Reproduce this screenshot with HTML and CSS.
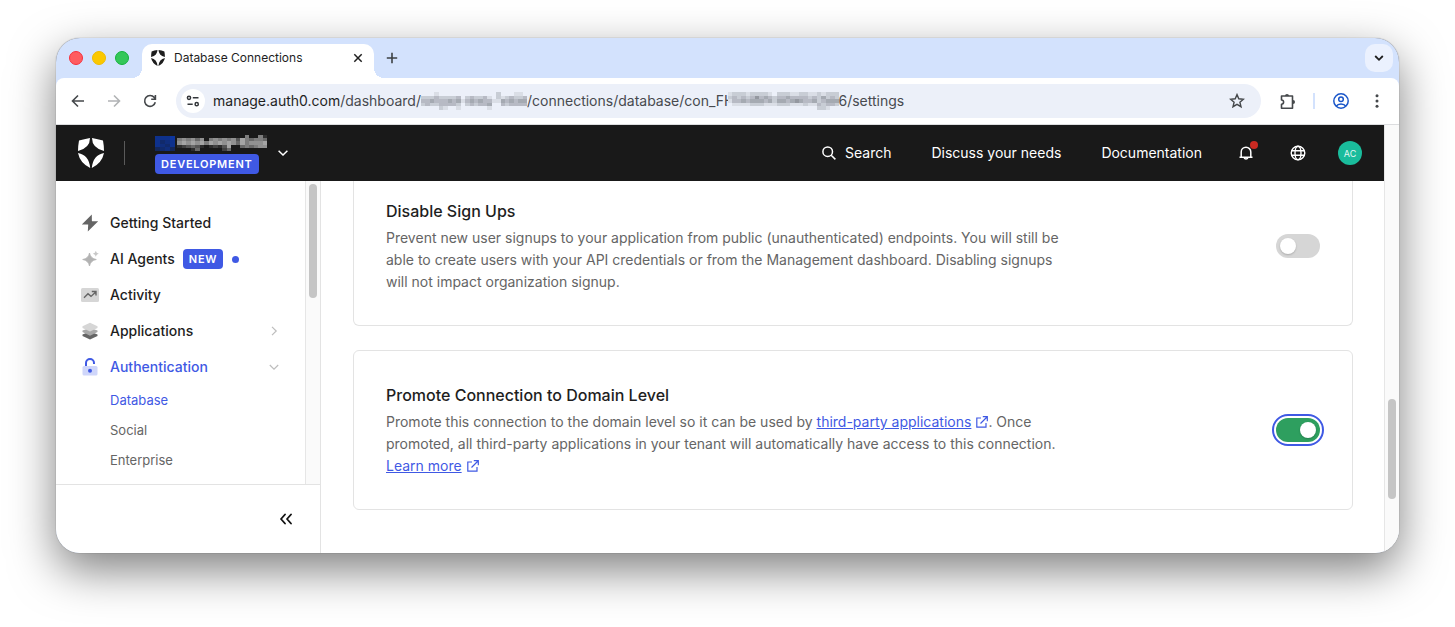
FILE: index.html
```html
<!DOCTYPE html>
<html lang="en">
<head>
  <meta charset="UTF-8" />
  <meta name="viewport" content="width=device-width, initial-scale=1.0" />
  <title>Database Connections</title>
  <link rel="stylesheet" href="styles.css">
</head>
<body>
  <div class="window">
    <div class="tabstrip">
      <div class="lights">
        <span class="light red"></span>
        <span class="light yellow"></span>
        <span class="light green"></span>
      </div>
      <div class="tab">
        <svg class="favicon" width="14" height="16" viewBox="0 0 26 30" fill="#1e1e1e"><path d="M1 2.600Q6 1 12 0Q12 10 0 13Q0 8 1 2.600ZM25 2.600Q20 1 14 0Q14 10 26 13Q26 8 25 2.600ZM0 15Q11 17 12.200 30Q2 25 0 15ZM26 15Q15 17 13.800 30Q24 25 26 15Z"/></svg>
        <span class="tab-title">Database Connections</span>
        <button class="icon-btn tab-close" aria-label="Close tab"><svg width="10" height="10" viewBox="0 0 10 10" fill="none" stroke="#1f1f1f" stroke-width="1.500"><path d="M1.300 1.300l7.400 7.400M8.700 1.300L1.300 8.700"/></svg></button>
      </div>
      <button class="icon-btn new-tab" aria-label="New tab"><svg width="12" height="12" viewBox="0 0 12 12" fill="none" stroke="#3c4043" stroke-width="1.600"><path d="M6 .8v10.400M.8 6h10.400"/></svg></button>
      <button class="icon-btn tab-search" aria-label="Search tabs"><svg width="10" height="8" viewBox="0 0 10 8" fill="none" stroke="#1f1f1f" stroke-width="1.800"><path d="M1.200 2L5 5.800 8.800 2"/></svg></button>
    </div>

    <div class="toolbar">
      <button class="icon-btn nav-btn" aria-label="Back"><svg width="14" height="14" viewBox="0 0 14 14" fill="none" stroke="#45484b" stroke-width="1.600"><path d="M13 7H2M7 1.500L1.500 7 7 12.500"/></svg></button>
      <button class="icon-btn nav-btn" aria-label="Forward"><svg width="14" height="14" viewBox="0 0 14 14" fill="none" stroke="#b1b3b5" stroke-width="1.600"><path d="M1 7h11M7 1.500L12.500 7 7 12.500"/></svg></button>
      <button class="icon-btn nav-btn" aria-label="Reload"><svg width="14" height="14" viewBox="0 0 14 14" fill="none" stroke="#45484b" stroke-width="1.600"><path d="M12.300 8.300A5.400 5.400 0 1 1 11.300 3.600L12 4.500M12.400 1v4.200H8.200"/></svg></button>
      <div class="address">
        <button class="icon-btn site-info" aria-label="Site information"><svg width="14" height="12" viewBox="0 0 14 12" fill="none" stroke="#33363a" stroke-width="1.500"><circle cx="3" cy="2.800" r="1.600"/><path d="M6.800 2.800h5.700M1.500 9.200h5.200"/><circle cx="10.700" cy="9.200" r="1.600"/></svg></button>
        <div class="url"><span class="host">manage.auth0.com</span><span>/dashboard/</span><svg class="mosaic mosaic-path" data-ink="60,64,72" data-rows="000100000000000002000110,222322223023223102123223,334333434134343311434344,232233332023233400323333,000021001000000100000000"></svg><span>/connections/database/con_FH</span><svg class="mosaic mosaic-id" data-ink="60,64,72" data-rows="1222122221022211221121222,2323235343233433332324232,1334344434244345433423444,0111122211122211121132332,0000000000000000000022100"></svg><span>6/settings</span></div>
        <button class="icon-btn bookmark" aria-label="Bookmark"><svg width="16" height="16" viewBox="0 0 16 16" fill="none" stroke="#45484b" stroke-width="1.400"><path d="M8 1.600l1.800 4.200 4.600.4-3.500 3 1.100 4.500L8 11.300l-4 2.400 1.100-4.500-3.500-3 4.600-.4z"/></svg></button>
      </div>
      <button class="icon-btn extensions" aria-label="Extensions"><svg width="17" height="17" viewBox="0 0 17 17"><path d="M2.500 3h11v3.500V15.200h-11v-4a2 2 0 0 0 0-4.200z" fill="none" stroke="#45484b" stroke-width="1.600" stroke-linejoin="round"/><path d="M6 3a2 2 0 0 1 4 0z" fill="#45484b"/><path d="M14 7a2 2 0 0 1 0 4z" fill="#45484b"/></svg></button>
      <span class="toolbar-sep"></span>
      <button class="icon-btn profile" aria-label="Profile"><svg width="16" height="16" viewBox="0 0 16 16" fill="none" stroke="#1a56c9" stroke-width="1.500"><circle cx="8" cy="8" r="7.200"/><circle cx="8" cy="6.300" r="2.300"/><path d="M3.100 13.200q1.600-2.200 4.900-2.200t4.900 2.200"/></svg></button>
      <button class="icon-btn more" aria-label="More"><svg width="4" height="14" viewBox="0 0 4 14" fill="#45484b"><circle cx="2" cy="1.700" r="1.500"/><circle cx="2" cy="7" r="1.500"/><circle cx="2" cy="12.300" r="1.500"/></svg></button>
    </div>

    <div class="viewport">
      <div class="page">
        <header class="header">
          <a href="#" class="logo" aria-label="Auth0"><svg width="26" height="30" viewBox="0 0 26 30" fill="#fff"><path d="M1 2.600Q6 1 12 0Q12 10 0 13Q0 8 1 2.600ZM25 2.600Q20 1 14 0Q14 10 26 13Q26 8 25 2.600ZM0 15Q11 17 12.200 30Q2 25 0 15ZM26 15Q15 17 13.800 30Q24 25 26 15Z"/></svg></a>
          <span class="header-sep"></span>
          <button class="tenant" aria-label="Switch tenant">
            <span class="tenant-info">
              <span class="tenant-name"><svg class="mosaic mosaic-flag" data-ink="10,60,190" data-rows="7778,7567,7657,4564"></svg><svg class="mosaic mosaic-tenant" data-ink="225,225,225" data-rows="00000000000000050051,56564605656563754554,67676757676764756667,12343101213700454566,00014000002400000000"></svg></span>
              <span class="badge">DEVELOPMENT</span>
            </span>
            <svg width="10" height="6" viewBox="0 0 10 6" fill="none" stroke="#fff" stroke-width="1.500"><path d="M.6.7L5 5 9.400.7"/></svg>
          </button>
          <nav class="header-nav">
            <a href="#" class="search"><svg width="14" height="14" viewBox="0 0 14 14" fill="none" stroke="#fff" stroke-width="1.500"><circle cx="5.700" cy="5.700" r="4.800"/><path d="M9.200 9.200l4.200 4.200"/></svg>Search</a>
            <a href="#">Discuss your needs</a>
            <a href="#">Documentation</a>
          </nav>
          <div class="header-tools">
            <button class="icon-btn bell" aria-label="Notifications"><svg width="16" height="16" viewBox="0 0 16 16" fill="none" stroke="#fff" stroke-width="1.500"><path d="M1.500 12.300h13M3.200 12V7a4.800 4.800 0 0 1 9.600 0v5M6.200 12.800a1.900 1.900 0 0 0 3.600 0"/></svg><span class="bell-dot"></span></button>
            <button class="icon-btn" aria-label="Language"><svg width="16" height="16" viewBox="0 0 16 16" fill="none" stroke="#fff" stroke-width="1.400"><circle cx="8" cy="8" r="6.800"/><ellipse cx="8" cy="8" rx="3" ry="6.800"/><path d="M1.500 5.800h13M1.500 10.200h13"/></svg></button>
            <button class="avatar">AC</button>
          </div>
        </header>

        <div class="body-row">
          <aside class="sidebar">
            <div class="nav-scroll">
              <nav class="menu">
                <a href="#" class="item"><svg width="18" height="18" viewBox="0 0 18 18"><path d="M10.800.6L.8 10.500h6.400L6.800 17.400 17.200 7.200h-6.300z" fill="#656565"/></svg>Getting Started</a>
                <a href="#" class="item"><svg width="18" height="18" viewBox="0 0 18 18"><path d="M8.500 3q1 5.500 6.800 6.500-5.800 1-6.800 6.500Q7.500 10.500 1.700 9.500 7.500 8.500 8.500 3z" fill="#b2b2b2" stroke="#b2b2b2" stroke-width=".8"/><path d="M14.800.8q.4 2.300 3 3-2.600.7-3 3-.4-2.300-3-3 2.600-.7 3-3z" fill="#c8c8c8"/></svg>AI Agents<span class="badge new">NEW</span><span class="dot"></span></a>
                <a href="#" class="item"><svg width="18" height="18" viewBox="0 0 18 18"><rect y="2" width="18" height="14" rx="1.500" fill="#d6d6d6"/><path d="M3 11.800l4-4 3 2.600 4.500-4.200M10.800 5.500H15v4" fill="none" stroke="#656565" stroke-width="1.400"/></svg>Activity</a>
                <a href="#" class="item"><svg width="18" height="18" viewBox="0 0 18 18"><path d="M1.500 12.500L9 9.500l7.500 3V14L9 17.600 1.500 14z" fill="#656565"/><path d="M1.500 8.500L9 6l7.500 2.500V10L9 13.700 1.500 10z" fill="#a8a8a8"/><path d="M1.500 4.200L9 .8l7.500 3.400V6L9 9.600 1.500 6z" fill="#d6d6d6"/></svg>Applications<svg class="arrow" width="10" height="10" viewBox="0 0 10 10" fill="none" stroke="#bdbdbd" stroke-width="1.200"><path d="M3 .8L7.200 5 3 9.200"/></svg></a>
                <a href="#" class="item active"><svg width="18" height="18" viewBox="0 0 18 18"><rect x="1.500" y="8" width="15" height="9.500" rx="1.500" fill="#cfd6fa"/><path d="M5 8V5a4 4 0 0 1 8 0v1" fill="none" stroke="#3f59e4" stroke-width="2"/><circle cx="9" cy="12.700" r="2" fill="#3f59e4"/></svg>Authentication<svg class="arrow" width="10" height="10" viewBox="0 0 10 10" fill="none" stroke="#bdbdbd" stroke-width="1.200"><path d="M.8 3L5 7.200 9.200 3"/></svg></a>
                <a href="#" class="sub active">Database</a>
                <a href="#" class="sub">Social</a>
                <a href="#" class="sub">Enterprise</a>
              </nav>
              <div class="rail"><span class="thumb"></span></div>
            </div>
            <div class="collapse">
              <button class="icon-btn" aria-label="Collapse sidebar"><svg width="12" height="12" viewBox="0 0 12 12" fill="none" stroke="#111" stroke-width="1.800" stroke-linecap="round" stroke-linejoin="round"><path d="M5 1.500L1 6l4 4.500M11 1.500L7 6l4 4.500"/></svg></button>
            </div>
          </aside>

          <main class="content">
            <section class="card card-cut">
              <div class="card-text">
                <h2><label for="signups">Disable Sign Ups</label></h2>
                <p>Prevent new user signups to your application from public (unauthenticated) endpoints. You will still be able to create users with your API credentials or from the Management dashboard. Disabling signups will not impact organization signup.</p>
              </div>
              <input type="checkbox" role="switch" class="switch" id="signups">
            </section>
            <section class="card">
              <div class="card-text">
                <h2><label for="promote">Promote Connection to Domain Level</label></h2>
                <p>Promote this connection to the domain level so it can be used by <a href="#">third-party applications</a><svg class="ext" width="12" height="12" viewBox="0 0 12 12" fill="none" stroke="#3f59e4" stroke-width="1.200"><path d="M5 2H.8v9.200H10V7M4.500 7.500L11 1M6.800.7h4.500v4.500"/></svg>. Once promoted, all third-party applications in your tenant will automatically have access to this connection. <a href="#">Learn more</a><svg class="ext" width="12" height="12" viewBox="0 0 12 12" fill="none" stroke="#3f59e4" stroke-width="1.200"><path d="M5 2H.8v9.200H10V7M4.500 7.500L11 1M6.800.7h4.500v4.500"/></svg></p>
              </div>
              <input type="checkbox" role="switch" class="switch focused" id="promote" checked>
            </section>
          </main>
        </div>
      </div>
      <div class="rail page-rail"><span class="thumb"></span></div>
    </div>
  </div>

  <script src="script.js"></script>
</body>
</html>
```
FILE: styles.css
```css
* {
  box-sizing: border-box;
}

body {
  margin: 0;
  padding: 38px 56px 74px;
  height: 100vh;
  background-color: #fff;
  font-family: Inter, "Liberation Sans", sans-serif;
  font-size: 14px;
  line-height: 22px;
  color: #1e1e1e;
  overflow: hidden;
}

a {
  color: inherit;
  text-decoration: none;
}

button {
  padding: 0;
  border: none;
  background: none;
  font-family: inherit;
  cursor: pointer;
}

svg {
  display: block;
  flex-shrink: 0;
}

.icon-btn {
  display: flex;
  align-items: center;
  justify-content: center;
  flex-shrink: 0;
}

.window {
  display: flex;
  flex-direction: column;
  height: 100%;
  border-radius: 24px;
  overflow: hidden;
  background-color: #d3e2fd;
  box-shadow: 0 0 1px rgba(0, 0, 0, 0.6), 0 17px 46px rgba(0, 0, 0, 0.5);
}

/* browser tabs */
.tabstrip {
  display: flex;
  align-items: flex-end;
  height: 40px;
  flex-shrink: 0;
}

.lights {
  display: flex;
  gap: 9px;
  padding: 0 13px 13px;
}

.light {
  width: 14px;
  height: 14px;
  border-radius: 50%;
  border: 1px solid;
}

.red {
  background-color: #ff5c60;
  border-color: #f5303c;
}

.yellow {
  background-color: #fbc800;
  border-color: #eebb00;
}

.green {
  background-color: #34c759;
  border-color: #14b13c;
}

.tab {
  position: relative;
  display: flex;
  align-items: center;
  width: 232px;
  height: 34px;
  padding: 0 10px 6px 9px;
  background-color: #fff;
  border-radius: 10px 10px 0 0;
}

.tab::before,
.tab::after {
  content: "";
  position: absolute;
  bottom: 0;
  width: 10px;
  height: 10px;
}

.tab::before {
  right: 100%;
  background: radial-gradient(circle at 0 0, transparent 10px, #fff 10px);
}

.tab::after {
  left: 100%;
  background: radial-gradient(circle at 100% 0, transparent 10px, #fff 10px);
}

.tab-title {
  flex: 1;
  margin-left: 9px;
  font-size: 12px;
}

.tab-close {
  width: 12px;
  height: 16px;
}

.new-tab {
  width: 36px;
  height: 40px;
}

.tab-search {
  width: 28px;
  height: 28px;
  margin: 0 6px 6px auto;
  border-radius: 10px;
  background-color: #ebf1fe;
}

/* address bar */
.toolbar {
  display: flex;
  align-items: center;
  height: 47px;
  flex-shrink: 0;
  padding: 0 20px 0 4px;
  background-color: #fff;
  border-bottom: 1px solid #dcdddf;
  border-radius: 8px 8px 0 0;
}

.nav-btn {
  width: 36px;
  height: 34px;
}

.address {
  display: flex;
  align-items: center;
  flex: 1;
  height: 34px;
  margin: 0 18px 0 8px;
  padding: 0 16px 0 5px;
  border-radius: 17px;
  background-color: #ecf0f9;
}

.site-info {
  width: 24px;
  height: 24px;
  border-radius: 50%;
  background-color: #fff;
}

.url {
  display: flex;
  align-items: center;
  flex: 1;
  margin-left: 8px;
  color: #474a4f;
  white-space: nowrap;
}

.host {
  color: #1f1f1f;
}

.toolbar-sep {
  width: 2px;
  height: 16px;
  margin: 0 18px 0 17px;
  background-color: #d3e2fd;
}

.more {
  width: 4px;
  margin-left: 26px;
}

.mosaic-path {
  width: 106px;
  height: 18px;
}

/* hides the end of the letter before it */
.mosaic-id {
  width: 111px;
  height: 18px;
  margin-left: -7px;
  background-color: #ecf0f9;
}

.mosaic-flag {
  width: 20px;
  height: 15px;
}

.mosaic-tenant {
  width: 90px;
  height: 16px;
}

/* page */
.viewport {
  display: flex;
  flex: 1;
  min-height: 0;
  background-color: #fff;
}

.page {
  display: flex;
  flex-direction: column;
  flex: 1;
  min-width: 0;
}

.header {
  display: flex;
  align-items: center;
  height: 56px;
  flex-shrink: 0;
  padding: 0 22px;
  background-color: #191919;
  color: #fff;
}

.header-sep {
  width: 1px;
  height: 24px;
  margin: 0 30px 0 20px;
  background-color: #5a5a5a;
}

.tenant {
  display: flex;
  align-items: center;
  gap: 20px;
  color: #fff;
}

.tenant-info {
  display: flex;
  flex-direction: column;
  align-items: flex-start;
  gap: 3px;
  width: 103px;
  padding-top: 3px;
}

.tenant-name {
  display: flex;
  align-items: center;
  gap: 2px;
}

.badge {
  padding: 0 6px;
  border-radius: 4px;
  background-color: #3f59e4;
  color: #fff;
  font-size: 11px;
  font-weight: 600;
  line-height: 20px;
  letter-spacing: 0.07em;
}

.header-nav {
  display: flex;
  align-items: center;
  gap: 40px;
  margin-left: auto;
}

.search {
  display: flex;
  align-items: center;
  gap: 9px;
}

.header-tools {
  display: flex;
  align-items: center;
  gap: 36px;
  margin-left: 36px;
}

.bell {
  position: relative;
}

.bell-dot {
  position: absolute;
  top: -4px;
  right: -4px;
  width: 8px;
  height: 8px;
  border-radius: 50%;
  background-color: #c92a22;
}

.avatar {
  width: 24px;
  height: 24px;
  margin-left: -4px;
  border-radius: 50%;
  background-color: #1abc9c;
  color: #e3f7f2;
  font-size: 9px;
}

.body-row {
  display: flex;
  flex: 1;
  min-height: 0;
}

.sidebar {
  display: flex;
  flex-direction: column;
  width: 265px;
  flex-shrink: 0;
  border-right: 1px solid #e3e3e3;
}

.nav-scroll {
  display: flex;
  flex: 1;
  min-height: 0;
  border-bottom: 1px solid #e3e3e3;
}

.menu {
  flex: 1;
  padding: 24px 26px 0 25px;
  overflow: hidden;
}

.item {
  display: flex;
  align-items: center;
  gap: 11px;
  height: 36px;
  font-weight: 500;
}

.item .arrow {
  margin-left: auto;
}

.item .new {
  margin-left: -3px;
}

.dot {
  width: 7px;
  height: 7px;
  margin-left: -2px;
  border-radius: 50%;
  background-color: #3f59e4;
}

.sub {
  display: block;
  padding-left: 29px;
  font-size: 13px;
  line-height: 30px;
  color: #656565;
}

.active {
  color: #3f59e4;
}

.rail {
  display: flex;
  justify-content: center;
  width: 15px;
  flex-shrink: 0;
  padding-top: 3px;
  border-left: 1px solid #e6e6e6;
  background-color: #fafafa;
}

.thumb {
  width: 8px;
  height: 114px;
  border-radius: 4px;
  background-color: #c5c5c5;
}

.page-rail {
  padding-top: 274px;
}

.page-rail .thumb {
  height: 100px;
}

.collapse {
  display: flex;
  align-items: center;
  justify-content: flex-end;
  height: 68px;
  flex-shrink: 0;
  padding-right: 28px;
}

.content {
  display: flex;
  flex-direction: column;
  gap: 24px;
  flex: 1;
  min-width: 0;
  padding: 0 31px 0 32px;
  overflow: hidden;
}

.card {
  display: flex;
  align-items: center;
  justify-content: space-between;
  padding: 32px;
  border: 1px solid #e3e3e3;
  border-radius: 6px;
}

/* first card is scrolled partly under the header */
.card-cut {
  padding-top: 18px;
  border-top: none;
  border-radius: 0 0 6px 6px;
}

.card-text {
  max-width: 684px;
}

.card h2 {
  margin: 0 0 4px;
  font-size: 16px;
  font-weight: 500;
  line-height: 24px;
}

.card p {
  margin: 0;
  color: #656565;
}

.card p a {
  color: #3f59e4;
  text-decoration: underline;
}

.ext {
  display: inline-block;
  margin-left: 5px;
  vertical-align: -1px;
}

.switch {
  appearance: none;
  width: 44px;
  height: 24px;
  flex-shrink: 0;
  margin: 0;
  padding: 4px;
  border-radius: 12px;
  background-color: #d6d6d6;
  cursor: pointer;
}

.switch::before {
  content: "";
  display: block;
  width: 16px;
  height: 16px;
  border-radius: 50%;
  background-color: #fff;
  box-shadow: 0 1px 2px rgba(0, 0, 0, 0.2);
}

.switch:checked {
  background-color: #2e9f5f;
}

.switch:checked::before {
  margin-left: auto;
}

.switch.focused {
  outline: 2px solid #3f59e4;
  outline-offset: 2px;
}
```
FILE: script.js
```js
// each digit in data-rows is the strength of one mosaic block
document.querySelectorAll('.mosaic').forEach(svg => {
  const rows = svg.dataset.rows.split(',');
  svg.setAttribute('viewBox', `0 0 ${rows[0].length} ${rows.length}`);
  svg.setAttribute('preserveAspectRatio', 'none');
  svg.setAttribute('shape-rendering', 'crispEdges');
  svg.innerHTML = rows.map((row, y) => [...row].map((level, x) =>
    `<rect x="${x}" y="${y}" width="1" height="1" fill="rgba(${svg.dataset.ink},${level / 10})"/>`
  ).join('')).join('');
});
```
